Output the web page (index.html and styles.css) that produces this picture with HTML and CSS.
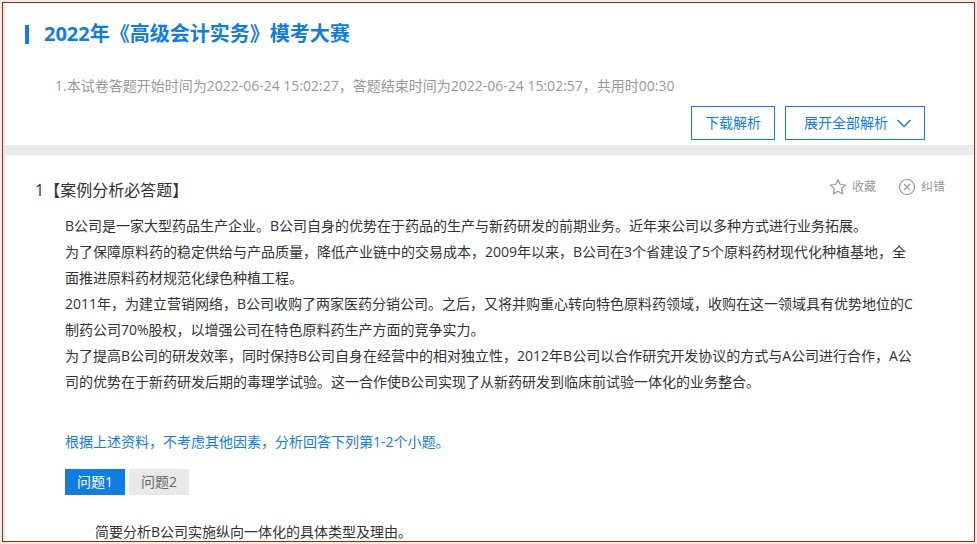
FILE: index.html
```
<!DOCTYPE html>
<html lang="zh-CN">
<head>
  <meta charset="UTF-8" />
  <meta name="viewport" content="width=device-width, initial-scale=1.0"/>
  <title>2022年《高级会计实务》模考大赛</title>
  <link rel="stylesheet" href="styles.css">
</head>
<body>
  <div class="page">
    <header class="paper-head">
      <h1>2022年《高级会计实务》模考大赛</h1>
      <p class="paper-info">1.本试卷答题开始时间为2022-06-24 15:02:27，答题结束时间为2022-06-24 15:02:57，共用时00:30</p>
      <div class="paper-actions">
        <button type="button" class="btn">下载解析</button>
        <button type="button" class="btn btn-expand">展开全部解析
          <svg width="16" height="10" viewBox="0 0 16 10" fill="none" stroke="currentColor" stroke-width="1.4"><path d="M1.500 2L8 8.500 14.500 2"/></svg>
        </button>
      </div>
    </header>

    <main class="question">
      <div class="question-head">
        <h2>1【案例分析必答题】</h2>
        <div class="tools">
          <button type="button" class="tool">
            <svg width="18" height="18" viewBox="0 0 18 18" fill="none" stroke="currentColor" stroke-width="1.2" stroke-linejoin="round"><path d="M9 1.500l2.200 5 5.300.5-4 3.600 1.200 5.400L9 13.200 4.300 16l1.200-5.400-4-3.600 5.300-.5z"/></svg>
            收藏
          </button>
          <button type="button" class="tool">
            <svg width="18" height="18" viewBox="0 0 18 18" fill="none" stroke="currentColor" stroke-width="1.2"><circle cx="9" cy="9" r="7.500"/><path d="M6 6l6 6M12 6l-6 6"/></svg>
            纠错
          </button>
        </div>
      </div>

      <div class="material">
        <p>B公司是一家大型药品生产企业。B公司自身的优势在于药品的生产与新药研发的前期业务。近年来公司以多种方式进行业务拓展。</p>
        <p>为了保障原料药的稳定供给与产品质量，降低产业链中的交易成本，2009年以来，B公司在3个省建设了5个原料药材现代化种植基地，全面推进原料药材规范化绿色种植工程。</p>
        <p>2011年，为建立营销网络，B公司收购了两家医药分销公司。之后，又将并购重心转向特色原料药领域，收购在这一领域具有优势地位的C制药公司70%股权，以增强公司在特色原料药生产方面的竞争实力。</p>
        <p>为了提高B公司的研发效率，同时保持B公司自身在经营中的相对独立性，2012年B公司以合作研究开发协议的方式与A公司进行合作，A公司的优势在于新药研发后期的毒理学试验。这一合作使B公司实现了从新药研发到临床前试验一体化的业务整合。</p>
        <p class="hint">根据上述资料，不考虑其他因素，分析回答下列第1-2个小题。</p>
      </div>

      <div class="tabs">
        <button type="button" class="tab active">问题1</button>
        <button type="button" class="tab">问题2</button>
      </div>
      <p class="sub-question">简要分析B公司实施纵向一体化的具体类型及理由。</p>
    </main>
  </div>
</body>
</html>
```

FILE: styles.css
```
* {
  box-sizing: border-box;
}

body {
  margin: 0;
  padding: 2px;
  background-color: #ececec;
  color: #333;
  font-family: "Open Sans", "Noto Sans CJK SC", sans-serif;
  font-size: 14px;
  line-height: 26px;
}

h1, h2, p {
  margin: 0;
}

button {
  font: inherit;
  cursor: pointer;
}

.page {
  min-height: calc(100vh - 4px);
  border: 1px solid #a32a00;
  padding-left: 2px;
  background-color: #e8eaeb;
  display: flex;
  flex-direction: column;
}

/* Paper header */
.paper-head {
  background-color: #fff;
  padding: 16px 49px 5px 20px;
}

h1 {
  display: flex;
  align-items: center;
  gap: 15px;
  color: #117de1;
  font-size: 20px;
  line-height: 30px;
}

h1::before {
  content: "";
  width: 4px;
  height: 19px;
  background-color: #117de1;
}

.paper-info {
  padding: 24px 0 7px 30px;
  color: #999;
}

.paper-actions {
  display: flex;
  justify-content: flex-end;
  gap: 10px;
}

.btn {
  height: 34px;
  padding: 0 13px;
  border: 1px solid #117de1;
  background-color: #fff;
  color: #117de1;
}

.btn-expand {
  display: flex;
  align-items: center;
  gap: 8px;
  padding: 0 12px 0 18px;
}

/* Question */
.question {
  flex: 1;
  margin-top: 10px;
  padding: 20px 29px 0 30px;
  background-color: #fff;
}

.question-head {
  display: flex;
  justify-content: space-between;
  align-items: flex-start;
}

h2 {
  font-size: 16px;
  font-weight: normal;
  line-height: 30px;
}

.tools {
  display: flex;
  gap: 22px;
}

.tool {
  display: flex;
  align-items: center;
  gap: 5px;
  padding: 0;
  border: none;
  background: none;
  color: #999;
  font-size: 12px;
  line-height: 24px;
}

.material {
  padding: 8px 29px 0 30px;
}

.hint {
  margin-top: 34px;
  color: #117de1;
}

.tabs {
  display: flex;
  gap: 4px;
  padding: 14px 30px 28px;
}

.tab {
  width: 60px;
  height: 26px;
  padding: 0;
  border: none;
  background-color: #e9e9e9;
  color: #666;
}

.tab.active {
  background-color: #117de1;
  color: #fff;
}

.sub-question {
  padding-left: 60px;
  line-height: 18px;
}
```
